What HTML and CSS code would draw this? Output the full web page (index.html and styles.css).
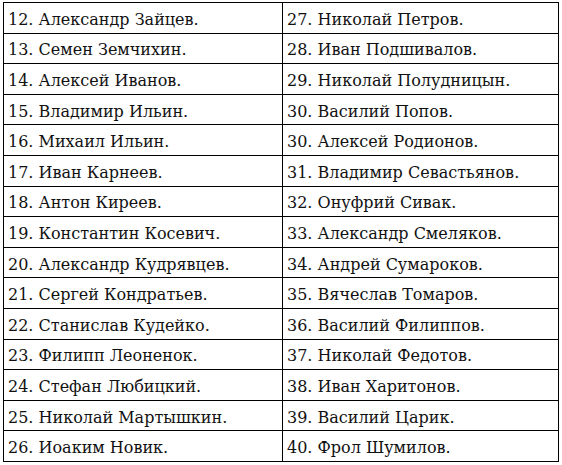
FILE: index.html
```html
<!DOCTYPE html>
<html lang="ru">
<head>
<meta charset="utf-8">
<link rel="stylesheet" href="styles.css">
</head>
<body>
<table class="list">
<tr><td>12. Александр Зайцев.</td><td>27. Николай Петров.</td></tr>
<tr><td>13. Семен Земчихин.</td><td>28. Иван Подшивалов.</td></tr>
<tr><td>14. Алексей Иванов.</td><td>29. Николай Полудницын.</td></tr>
<tr><td>15. Владимир Ильин.</td><td>30. Василий Попов.</td></tr>
<tr><td>16. Михаил Ильин.</td><td>30. Алексей Родионов.</td></tr>
<tr><td>17. Иван Карнеев.</td><td>31. Владимир Севастьянов.</td></tr>
<tr><td>18. Антон Киреев.</td><td>32. Онуфрий Сивак.</td></tr>
<tr><td>19. Константин Косевич.</td><td>33. Александр Смеляков.</td></tr>
<tr><td>20. Александр Кудрявцев.</td><td>34. Андрей Сумароков.</td></tr>
<tr><td>21. Сергей Кондратьев.</td><td>35. Вячеслав Томаров.</td></tr>
<tr><td>22. Станислав Кудейко.</td><td>36. Василий Филиппов.</td></tr>
<tr><td>23. Филипп Леоненок.</td><td>37. Николай Федотов.</td></tr>
<tr><td>24. Стефан Любицкий.</td><td>38. Иван Харитонов.</td></tr>
<tr><td>25. Николай Мартышкин.</td><td>39. Василий Царик.</td></tr>
<tr><td>26. Иоаким Новик.</td><td>40. Фрол Шумилов.</td></tr>
</table>
</body>
</html>
```
FILE: styles.css
```css
html, body {
  margin: 0;
  padding: 0;
  background: #fff;
}
body {
  padding: 2px 0 0 3px;
  font-family: "DejaVu Serif", "Liberation Serif", serif;
  color: #111;
}
.list {
  border-collapse: collapse;
  width: 556px;
  height: 460px;
  table-layout: fixed;
}
.list td {
  border: 1px solid #000;
  font-size: 16px;
  line-height: 18px;
  padding: 4px 4px 0 4px;
  white-space: nowrap;
  vertical-align: middle;
}
.list td:first-child {
  width: 270px;
}
```
